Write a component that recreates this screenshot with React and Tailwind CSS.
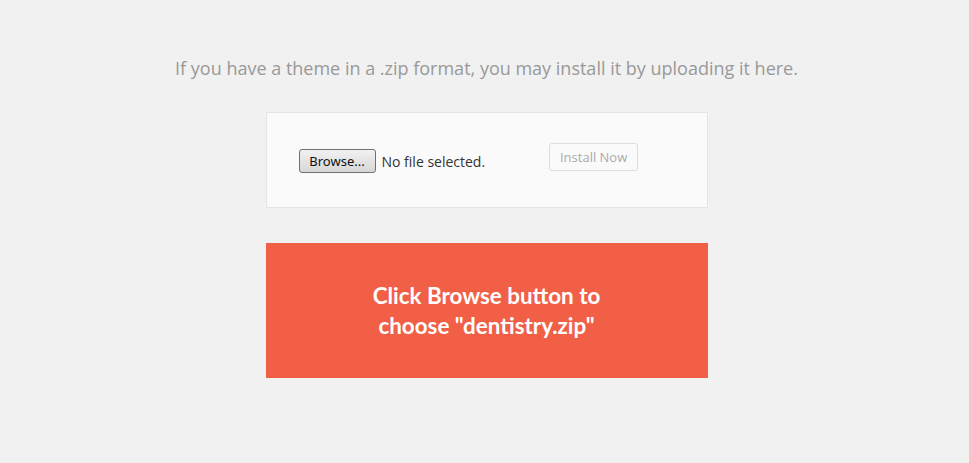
export default function App() {
    return (
        <div className="min-h-[463px] bg-[#f1f1f1] font-['Open_Sans',sans-serif] flex flex-col items-center pl-[4px]">
            <p className="mt-[55px] text-[18px] leading-[26px] text-[#999999]">
                If you have a theme in a .zip format, you may install it by uploading it here.
            </p>

            <div className="mt-[31px] w-[442px] h-[96px] bg-[#fafafa] border border-[#e5e5e5] flex items-start pl-[32px] pt-[30px]">
                <div className="mt-[6px] flex items-center">
                    <button className="w-[77px] h-[24px] border border-[#707070] rounded-[3px] bg-gradient-to-b from-[#f2f2f2] to-[#d6d6d6] text-[13px] leading-none text-[#111] font-['Noto_Sans',sans-serif]">
                        Browse...
                    </button>
                    <span className="ml-[6px] text-[14px] leading-[19px] text-[#333]">No file selected.</span>
                </div>
                <button className="ml-[64px] w-[89px] h-[28px] border border-[#dddddd] rounded-[3px] bg-[#fafafa] text-[13px] leading-[26px] text-[#aaaaaa]">
                    Install Now
                </button>
            </div>

            <div className="mt-[35px] w-[442px] h-[135px] bg-[#f15f46] flex items-center justify-center">
                <p className="text-center text-white font-['Lato',sans-serif] font-bold text-[22.4px] leading-[30px]">
                    Click Browse button to
                    <br />
                    choose "dentistry.zip"
                </p>
            </div>
        </div>
    );
}
